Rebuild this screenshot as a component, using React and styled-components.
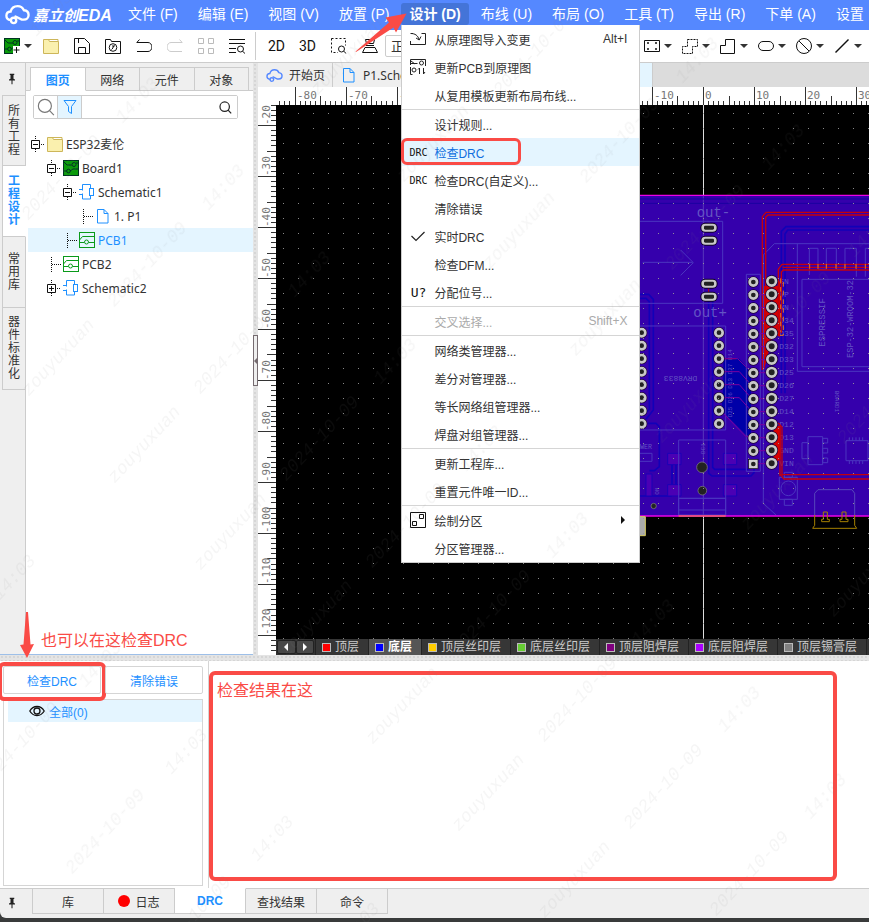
import React from 'react';
import styled, { createGlobalStyle, css } from 'styled-components';

const GlobalStyle = createGlobalStyle`
  * {
    box-sizing: border-box;
  }
  body {
    margin: 0;
    background: #393b3b;
    color: #333;
    font-family: 'Liberation Sans', 'Noto Sans CJK SC', sans-serif;
    font-size: 12px;
    overflow-x: hidden;
  }
  button, input, select {
    font: inherit;
    color: inherit;
  }
  button {
    margin: 0;
    padding: 0;
    border: 0;
    background: none;
    white-space: nowrap;
  }
  svg {
    display: block;
    flex: none;
  }
`;

// =================================================================
//  Icons
// =================================================================

const Icon = ({ size = 16, children, ...rest }) => (
  <svg
    width={size}
    height={size}
    viewBox="0 0 16 16"
    fill="none"
    stroke="currentColor"
    strokeWidth="1"
    aria-hidden="true"
    {...rest}
  >
    {children}
  </svg>
);

const CloudIcon = ({ size, width = 1.5, color = 'currentColor' }) => (
  <Icon size={size} stroke={color} strokeWidth={width} strokeLinecap="round">
    <path d="M3.6 11.6C1.8 11.4.9 10.2.9 8.8c0-1.500 1.100-2.600 2.700-2.700C4.200 3.900 5.900 2.600 8 2.600c1.900 0 3.400 1 4.100 2.700 1.800.2 3 1.400 3 3 0 1.800-1.300 3-3.100 3h-1.300L6.700 9.300" />
    <circle cx="5.500" cy="11.800" r="1.700" />
  </Icon>
);

const BoardIcon = ({ plus }) => (
  <Icon stroke="#032">
    <rect x=".5" y=".5" width="15" height="15" fill="#0a9a0a" />
    <path d="M1 2l3 3h5M15 3h-2M1 11h3M7 11l3-2h5" />
    <circle cx="11" cy="4.500" r="2" />
    <circle cx="5.500" cy="11" r="1.800" />
    {plus && (
      <>
        <rect x="9" y="8" width="8" height="8" fill="#fff" stroke="none" />
        <path d="M12.500 9v6M9.500 12h6" stroke="#111" />
      </>
    )}
  </Icon>
);

const FolderIcon = () => (
  <Icon stroke="#cdb65a">
    <path d="M.5 1.500h5l1 2h9v12H.5z" fill="#faf0ae" />
    <path d="M1 1.500h5M6 1.500h9v2" />
  </Icon>
);

const PageIcon = () => (
  <Icon stroke="#1e90ff">
    <path d="M2.500 1.500h6.500l4 4v9.500h-10.500zM9 1.500v4h4" />
  </Icon>
);

const SchematicIcon = () => (
  <Icon stroke="#1e90ff">
    <path d="M3.500 5.500v-5h8v4M3.500 10.500v4.500h8v-4M0 5.500h4M0 10.500h4M3.500 5.500v1M3.500 9.500v1" />
    <rect x="10.500" y="4.500" width="4" height="7" />
  </Icon>
);

const PcbIcon = () => (
  <Icon stroke="#0a9a1a">
    <rect x=".5" y=".5" width="15" height="15" />
    <path d="M.5 8l3-3.500h12M1 10.500h4M10 10.500h5.500" />
    <circle cx="7.500" cy="10" r="2" />
  </Icon>
);

const PinIcon = () => (
  <Icon size={12} stroke="none" fill="#222">
    <path d="M5 1h6v1.500h-1v5l2 1v1.500H8.700V15H7.300v-5H4V8.500l2-1v-5H5z" />
  </Icon>
);

const SearchIcon = ({ size, color = '#222', width = 1 }) => (
  <Icon size={size} stroke={color} strokeWidth={width}>
    <circle cx="7" cy="7" r="5.800" />
    <path d="M11.200 11.200l3.800 4" />
  </Icon>
);

const EyeIcon = () => (
  <Icon stroke="#111" strokeWidth="1.300">
    <path d="M.8 8C2.500 5 5 3.500 8 3.500S13.500 5 15.200 8C13.500 11 11 12.500 8 12.500S2.500 11 .8 8z" />
    <circle cx="8" cy="8" r="3" />
  </Icon>
);

const Caret = () => (
  <svg width="8" height="4" viewBox="0 0 8 4" aria-hidden="true">
    <path d="M0 0h8L4 4z" fill="#333" />
  </svg>
);

const toolIcons = {
  save: <path d="M.5.5h10l5 5v10H.5zM4.500 15v-5.500h7V15M4.500 1v4" stroke="#111" />,
  history: (
    <g stroke="#111">
      <path d="M.5 15.500V1.500h5l1 2h9v12z" />
      <circle cx="8" cy="9.500" r="3.800" />
      <path d="M8 7v3l-1.500 1.500M8 9l2-1.500" />
    </g>
  ),
  undo: <path d="M3.500 1.500L.8 4.500H12a3.500 4 0 0 1 0 9H1" stroke="#111" />,
  redo: <path d="M12.500 1.500L15.200 4.500H4a3.500 4 0 0 0 0 9h11" stroke="#ccc" />,
  grid: <path d="M.5.5h5v5h-5zM10.500.5h5v5h-5zM.5 10.500h5v5h-5zM10.500 10.500h5v5h-5z" stroke="#bbb" />,
  find: (
    <g stroke="#111">
      <path d="M0 1.500h16M0 5.500h16M0 10.500h7M0 14.500h7" />
      <circle cx="11.500" cy="11" r="3" />
      <path d="M13.500 13.200l2.500 2.300" />
    </g>
  ),
  area: (
    <g stroke="#111">
      <path d="M.5.5h14v7M.5.5v14H7" strokeDasharray="2 2" />
      <circle cx="10.500" cy="11" r="3" />
      <path d="M12.700 13.200l2.500 2.300" />
    </g>
  ),
  flip: <path d="M4 7.500h8M3.500 1.500h9l-1 4h-7zM3 9.500h10l2.500 5H.5z" stroke="#111" />,
  pads: (
    <g stroke="#111">
      <path d="M.5 2.500h15v11H.5z" />
      <path d="M3 5h2M11 5h2M3 11h2M11 11h2" strokeWidth="1.500" />
    </g>
  ),
  region: <path d="M5.500 1.500h10v7h-5v7h-10v-7h5z" stroke="#111" strokeDasharray="2 1" />,
  shape: <path d="M5.500 1.500h9v14h-14v-8h5z" stroke="#111" />,
  oval: <rect x=".5" y="3.500" width="15" height="9" rx="4.500" stroke="#111" />,
  forbid: (
    <g stroke="#111">
      <circle cx="8" cy="8" r="7.500" />
      <path d="M3 3l10 10" />
    </g>
  ),
  line: <path d="M1.500 14.500L14.500 1.500" stroke="#111" strokeWidth="1.500" />,
};

const menuIcons = {
  import: (
    <g stroke="#222">
      <path d="M3 2.500H.5M.5 13.500h15v-11h-4M.5 10v4" />
      <path d="M1 2.500c4 0 7 2 8 6M6 7l3.200 2L11 5.500" />
    </g>
  ),
  update: (
    <g stroke="#222">
      <path d="M.5 6V.5h15V7M.5 4.500h7M.5 8v7.500h2M1 2l4 3M9.500 9v6M9.500 9L8 10.500M13.500 9v6M13.500 15l1.500-2" />
      <circle cx="11.500" cy="4" r="2" />
      <circle cx="4" cy="11" r="2" />
    </g>
  ),
  check: <path d="M1.500 8l4.500 4.500 8.500-8.500" stroke="#222" strokeWidth="1.200" />,
  zone: <path d="M.5.500h15v15H.5zM2.500 9.500h4v4h-4zM9.500 2.500h4v4h-4z" stroke="#111" />,
};

// =================================================================
//  Page frame
// =================================================================

const Page = styled.div`
  position: relative;
  display: flex;
  flex-direction: column;
  min-height: 100vh;
  padding-bottom: 4px;
  overflow: hidden;
`;

const MenuBar = styled.nav`
  display: flex;
  align-items: center;
  height: 30px;
  padding: 0 0 2px 5px;
  background: #5588ff;
  color: #fff;
  font-size: 14px;
`;

const Logo = styled.a`
  display: flex;
  flex: none;
  align-items: center;
  gap: 3px;
  width: 113px;
  color: #fff;
  font-weight: bold;
  font-style: italic;
  text-decoration: none;
  white-space: nowrap;
`;

const LogoName = styled.span`
  font-size: 15px;
`;

const LogoLatin = styled.span`
  font-size: 16px;
`;

const MenuSlot = styled.div`
  position: relative;
  flex: none;
  margin: 0 2px;
`;

const MenuButton = styled.button`
  display: block;
  height: 22px;
  padding: 0 8px;
  line-height: 22px;
  ${(props) =>
    props.$open &&
    css`
      border-radius: 3px;
      background: #4474d8;
      font-weight: bold;
    `}
`;

const Dropdown = styled.ul`
  position: absolute;
  z-index: 10;
  top: 22px;
  left: 0;
  width: 239px;
  margin: 0;
  padding: 0;
  border: 1px solid #ccc;
  border-top-width: 0;
  background: #fff;
  color: #333;
  font-size: 12px;
  list-style: none;
`;

const DropdownRow = styled.li`
  position: relative;
  border-top: ${(props) => (props.$divided ? '1px solid #d5d5d5' : '0')};
`;

const DropdownButton = styled.button`
  display: flex;
  align-items: center;
  gap: 8px;
  width: 100%;
  height: 28px;
  padding: 0 12px 0 8px;
  text-align: left;
  color: ${(props) => (props.$active ? '#0f6fe0' : props.disabled ? '#aaa' : '#333')};
  background: ${(props) => (props.$active ? '#e4f5ff' : 'transparent')};
`;

const IconCell = styled.span`
  display: flex;
  align-items: center;
  justify-content: center;
  flex: none;
  width: 16px;
  height: 16px;
  color: #111;
  font-family: 'DejaVu Sans Mono', monospace;
  font-size: ${(props) => (props.$large ? '13px' : '10px')};
`;

const Shortcut = styled.span`
  margin-left: auto;
`;

const ItemHighlight = styled.span`
  position: absolute;
  inset: 0 118px 1px -1px;
  border: 3px solid #fa4b46;
  border-radius: 6px;
  pointer-events: none;
`;

const ToolBar = styled.div`
  display: flex;
  align-items: center;
  height: 33px;
  padding-right: 2px;
  border-bottom: 1px solid #ccc;
  background: #fff;
`;

const Tool = styled.button`
  display: flex;
  align-items: center;
  justify-content: center;
  gap: 3px;
  flex: none;
  width: 31px;
  height: 32px;
  color: #111;
  font-family: Roboto, sans-serif;
  font-size: 14px;
`;

const WideTool = styled(Tool)`
  width: ${(props) => (props.$narrow ? '35px' : '38px')};
  gap: 4px;
`;

const Divider = styled.span`
  flex: none;
  width: 1px;
  height: 28px;
  margin: 0 5px 0 3px;
  background: #ccc;
`;

const ViewSelect = styled.select`
  width: 90px;
  height: 22px;
  padding: 0 0 0 1px;
  border: 1px solid #ccc;
  border-radius: 2px;
  background: #fff;
  font-size: 13px;
`;

const ToolGroup = styled.div`
  display: flex;
  margin-left: ${(props) => (props.$end ? 'auto' : '0')};
`;

const Workspace = styled.div`
  display: flex;
  flex: 1;
  min-height: 560px;
`;

// Left dock
const SideTabs = styled.div`
  display: flex;
  flex-direction: column;
  flex: none;
  width: 26px;
  padding-left: 2px;
  border-right: 1px solid #ccc;
  border-bottom: 1px solid #9dbfe8;
  background: #efefef;
`;

const PinButton = styled.button`
  display: flex;
  align-items: center;
  justify-content: center;
  flex: none;
  width: ${(props) => (props.$wide ? '24px' : '20px')};
  height: ${(props) => (props.$wide ? '28px' : '32px')};
`;

const SideTab = styled.button`
  width: 24px;
  min-height: 71px;
  padding: 8px 5px;
  border: 1px solid #ccc;
  border-top-width: ${(props) => (props.$first ? '1px' : '0')};
  border-right-color: ${(props) => (props.$active ? '#fff' : '#ccc')};
  background: ${(props) => (props.$active ? '#fff' : '#efefef')};
  color: ${(props) => (props.$active ? '#1e90ff' : '#333')};
  font-weight: ${(props) => (props.$active ? 'bold' : 'normal')};
  line-height: 13px;
  white-space: normal;
`;

const TreePanel = styled.section`
  flex: none;
  width: 227px;
  border-bottom: 1px solid #9dbfe8;
  background: #fff;
`;

const PanelTabs = styled.div`
  display: flex;
  height: 28px;
  padding: 4px 4px 0;
  background: #efefef;
  box-shadow: inset 0 -1px #ccc;
`;

const PanelTab = styled.button`
  flex: 1;
  border: 1px solid #ccc;
  border-left-width: ${(props) => (props.$active ? '1px' : '0')};
  border-bottom-color: ${(props) => (props.$active ? '#fff' : '#ccc')};
  background: ${(props) => (props.$active ? '#fff' : '#efefef')};
  color: ${(props) => (props.$active ? '#1e90ff' : '#333')};
  font-weight: ${(props) => (props.$active ? 'bold' : 'normal')};
`;

const SearchBar = styled.form`
  display: flex;
  align-items: center;
  height: 24px;
  margin: 4px 15px 0 7px;
  border: 1px solid #ccc;
  border-radius: 2px;
`;

const SearchCell = styled.button`
  display: flex;
  align-items: center;
  justify-content: center;
  width: 24px;
  height: 22px;
  border-right: ${(props) => (props.$last ? '0' : '1px solid #ccc')};
  background: ${(props) => (props.$on ? '#e4f5ff' : '#fff')};
`;

const SearchInput = styled.input`
  flex: 1;
  min-width: 0;
  height: 20px;
  padding: 0 4px;
  border: 0;
  outline: 0;
`;

const Tree = styled.ul`
  margin: 13px 0 0;
  padding: 0 0 0 2px;
  list-style: none;
  font-family: 'Noto Sans', 'Noto Sans CJK SC', sans-serif;
`;

const TreeRow = styled.button`
  display: flex;
  align-items: center;
  width: 100%;
  height: 24px;
  padding-left: ${(props) => 3 + props.$level * 16}px;
  background: ${(props) => (props.$active ? '#e4f5ff' : 'transparent')};
  color: ${(props) => (props.$active ? '#1e90ff' : '#333')};
`;

const TreeLabel = styled.span`
  padding-left: 3px;
`;

const Splitter = styled.div`
  position: relative;
  flex: none;
  width: ${(props) => (props.$horizontal ? 'auto' : '5px')};
  height: ${(props) => (props.$horizontal ? '6px' : 'auto')};
  background: conic-gradient(#b0b0b0 25%, transparent 0) 1px 1px / 4px 3px #e6e6e6;
  background: radial-gradient(circle at 1px 1px, #b4b4b4 0, #e4e4e4 1px) 1px 1px / 4px 4px;
`;

const SplitHandle = styled.button`
  position: absolute;
  top: 46%;
  left: 0;
  display: flex;
  align-items: center;
  width: 5px;
  height: 51px;
  border: 1px solid #756b70;
  background: #eee;
`;

// Editor
const Editor = styled.main`
  display: flex;
  flex-direction: column;
  flex: 1;
  min-width: 0;
  background: #fff;
`;

const DocTabs = styled.div`
  display: flex;
  height: 24px;
  background: #dcdcdc;
`;

const DocTab = styled.button`
  display: flex;
  align-items: center;
  gap: 6px;
  flex: none;
  width: ${(props) => props.$width || 75}px;
  padding: 0 8px;
  border-right: 1px solid #ccc;
  background: ${(props) => (props.$active ? '#e4f5ff' : '#efefef')};
  font-family: 'Noto Sans', 'Noto Sans CJK SC', sans-serif;
`;

const RulerX = styled.svg`
  width: 100%;
  height: 18px;
`;

const CanvasRow = styled.div`
  display: flex;
  flex: 1;
  min-height: 0;
`;

const RulerY = styled.svg`
  width: 18px;
`;

const CanvasColumn = styled.div`
  display: flex;
  flex-direction: column;
  flex: 1;
  min-width: 0;
  background: #000;
`;

const Board = styled.svg`
  flex: 1 1 0;
  width: 100%;
  min-height: 0;
`;

const LayerBar = styled.div`
  display: flex;
  height: 16px;
  overflow: hidden;
  background: #333;
  color: #ccc;
`;

const LayerArrows = styled.div`
  display: flex;
  flex: none;
  width: 40px;
  padding: 1px;
  border-right: 1px solid #222;
`;

const LayerArrow = styled.button`
  display: flex;
  align-items: center;
  justify-content: center;
  flex: 1;
  border: 1px solid #222;
  border-radius: 2px;
  background: #484848;
`;

const LayerTab = styled.button`
  display: flex;
  align-items: center;
  gap: 4px;
  flex: none;
  padding: 0 9px 0 6px;
  border-right: 1px solid #222;
  background: ${(props) => (props.$active ? '#555' : '#363636')};
  color: ${(props) => (props.$active ? '#fff' : '#ccc')};
  font-weight: ${(props) => (props.$active ? 'bold' : 'normal')};
  line-height: 16px;
`;

const Swatch = styled.span`
  width: 9px;
  height: 9px;
  border: 1px solid #bbb;
  background: ${(props) => props.$color};
`;

// Bottom dock
const BottomDock = styled.section`
  display: flex;
  height: 227px;
  background: #fff;
`;

const DrcSide = styled.div`
  display: flex;
  flex-direction: column;
  flex: none;
  width: 209px;
  padding: 5px 5px 2px 3px;
  border-right: 1px solid #d5d5d5;
`;

const DrcButtons = styled.div`
  display: flex;
  gap: 4px;
  margin-bottom: 5px;
`;

const ButtonSlot = styled.div`
  position: relative;
  flex: 1;
`;

const DrcButton = styled.button`
  width: 100%;
  height: 28px;
  border: 1px solid #d5d5d5;
  border-radius: 2px;
  background: #fff;
  color: #1e90ff;
`;

const ButtonHighlight = styled.span`
  position: absolute;
  inset: -4px -5px -7px -5px;
  border: 4px solid #fa4b46;
  border-radius: 6px;
  pointer-events: none;
`;

const DrcList = styled.div`
  flex: 1;
  padding-left: 4px;
  border: 1px solid #d5d5d5;
`;

const DrcItem = styled.button`
  display: flex;
  align-items: center;
  gap: 4px;
  width: 100%;
  height: 22px;
  padding-left: 21px;
  background: #e4f5ff;
  color: #1e90ff;
`;

const ResultPane = styled.div`
  display: flex;
  flex: 1;
  min-width: 0;
  padding: 10px 32px 7px 0;
`;

const ResultNote = styled.p`
  flex: 1;
  margin: 0;
  padding: 4px;
  border: 4px solid #fa4b46;
  border-radius: 6px;
  color: #fa4b46;
  font-size: 16px;
  line-height: 24px;
`;

const BottomTabs = styled.div`
  display: flex;
  height: 30px;
  padding-bottom: 4px;
  border-radius: 0 0 0 6px;
  background: #efefef;
`;

const BottomTab = styled.button`
  display: flex;
  align-items: center;
  justify-content: center;
  gap: 5px;
  flex: none;
  width: 71px;
  border: 1px solid ${(props) => (props.$active ? '#fff' : '#ccc')};
  border-left-width: 0;
  border-right-color: #ccc;
  border-bottom-color: #ccc;
  background: ${(props) => (props.$active ? '#fff' : '#efefef')};
  color: ${(props) => (props.$active ? '#1e90ff' : '#333')};
  font-weight: ${(props) => (props.$active ? 'bold' : 'normal')};
`;

const BottomPin = styled.div`
  flex: none;
  width: 33px;
  border: solid #ccc;
  border-width: 1px 1px 0 0;
`;

const BottomRest = styled.div`
  flex: 1;
  border-top: 1px solid #ccc;
`;

const RedDot = styled.span`
  width: 12px;
  height: 12px;
  border-radius: 50%;
  background: #f00;
`;

// Notes and marks lying over the window
const NoteText = styled.p`
  position: absolute;
  bottom: 269px;
  left: 41px;
  margin: 0;
  color: #fa4b46;
  font-size: 16px;
  line-height: 24px;
`;

const MenuArrow = styled.svg`
  position: absolute;
  z-index: 20;
  top: 12px;
  left: 354px;
`;

const ButtonArrow = styled.svg`
  position: absolute;
  bottom: 263px;
  left: 19px;
`;

const WatermarkLayer = styled.svg`
  position: absolute;
  z-index: 30;
  inset: 0;
  width: 100%;
  height: 100%;
  pointer-events: none;
`;

// =================================================================
//  Data
// =================================================================

const menus = [
  '文件 (F)',
  '编辑 (E)',
  '视图 (V)',
  '放置 (P)',
  '设计 (D)',
  '布线 (U)',
  '布局 (O)',
  '工具 (T)',
  '导出 (R)',
  '下单 (A)',
  '设置',
];

const designItems = [
  { label: '从原理图导入变更', icon: 'import', shortcut: 'Alt+I' },
  { label: '更新PCB到原理图', icon: 'update' },
  { label: '从复用模板更新布局布线...' },
  { label: '设计规则...', divided: true },
  { label: '检查DRC', text: 'DRC', active: true },
  { label: '检查DRC(自定义)...', text: 'DRC' },
  { label: '清除错误' },
  { label: '实时DRC', icon: 'check' },
  { label: '检查DFM...' },
  { label: '分配位号...', text: 'U?', large: true },
  { label: '交叉选择...', shortcut: 'Shift+X', disabled: true, divided: true },
  { label: '网络类管理器...', divided: true },
  { label: '差分对管理器...' },
  { label: '等长网络组管理器...' },
  { label: '焊盘对组管理器...' },
  { label: '更新工程库...', divided: true },
  { label: '重置元件唯一ID...' },
  { label: '绘制分区', icon: 'zone', submenu: true, divided: true },
  { label: '分区管理器...' },
];

const treeItems = [
  { label: 'ESP32麦伦', level: 0, toggle: '-', icon: <FolderIcon /> },
  { label: 'Board1', level: 1, toggle: '-', icon: <BoardIcon /> },
  { label: 'Schematic1', level: 2, toggle: '-', icon: <SchematicIcon /> },
  { label: '1. P1', level: 3, icon: <PageIcon /> },
  { label: 'PCB1', level: 2, icon: <PcbIcon />, active: true },
  { label: 'PCB2', level: 1, icon: <PcbIcon /> },
  { label: 'Schematic2', level: 1, toggle: '+', icon: <SchematicIcon /> },
];

const layers = [
  ['顶层', '#ff0000'],
  ['底层', '#0000ff'],
  ['顶层丝印层', '#ffcc00'],
  ['底层丝印层', '#66cc33'],
  ['顶层阻焊层', '#800080'],
  ['底层阻焊层', '#aa00ff'],
  ['顶层锡膏层', '#808080'],
];

// text, first centre and how many repeats follow down the diagonal
const watermarks = [
  ['2024-10-09', 61, 177, 8],
  ['2024-10-09', 447, -34, 5],
  ['2024-10-09', 19, 744, 2],
  ['14:03', 51, 13, 9],
  ['14:03', 697, 60, 2],
  ['14:03', 14, 577, 4],
  ['zouyuxuan', 58, 357, 7],
  ['zouyuxuan', 347, 56, 6],
];

const range = (from, to) => Array.from({ length: to - from + 1 }, (_, i) => from + i);

// =================================================================
//  Parts
// =================================================================

const DesignMenu = () => (
  <Dropdown>
    {designItems.map((item) => (
      <DropdownRow key={item.label} $divided={item.divided}>
        <DropdownButton type="button" $active={item.active} disabled={item.disabled}>
          <IconCell $large={item.large}>
            {item.icon ? <Icon>{menuIcons[item.icon]}</Icon> : item.text}
          </IconCell>
          {item.label}
          {item.shortcut && <Shortcut>{item.shortcut}</Shortcut>}
          {item.submenu && (
            <Shortcut>
              <svg width="6" height="8" viewBox="0 0 6 8" aria-hidden="true">
                <path d="M0 0l4 4-4 4z" fill="#111" />
              </svg>
            </Shortcut>
          )}
        </DropdownButton>
        {item.active && <ItemHighlight />}
      </DropdownRow>
    ))}
  </Dropdown>
);

const TreeToggle = ({ sign }) => (
  <svg width="16" height="24" viewBox="0 0 16 24" fill="none" stroke="#111" aria-hidden="true">
    {sign ? (
      <>
        <path d="M4.500 4v4M4.500 17v4M10 12.500h4" strokeDasharray="1 1" />
        <path d="M.5 8.500h8v8h-8zM2 12.500h5" />
        {sign === '+' && <path d="M4.500 10v5" />}
      </>
    ) : (
      <path d="M4.500 5v15M5 12.500h9" strokeDasharray="1 1" />
    )}
  </svg>
);

// Horizontal scale, ten units every 51px, zero at x = 445
const HorizontalRuler = () => (
  <RulerX aria-hidden="true" shapeRendering="crispEdges">
    {range(-83, 120).map((n) => {
      const x = 445.5 + n * 5.105;
      const top = n % 10 === 0 ? 0 : n % 5 === 0 ? 9 : 14;
      return x > 18 && <path key={n} d={`M${x} ${top}V18`} stroke="#333" />;
    })}
    {range(-8, 3).map((n) => (
      <text
        key={n}
        x={447 + n * 51}
        y="12"
        fill="#777"
        fontFamily="'DejaVu Sans Mono', monospace"
        fontSize="11"
      >
        {n * 10}
      </text>
    ))}
  </RulerX>
);

const VerticalRuler = () => (
  <RulerY aria-hidden="true">
    {range(-130, -16).map((n) => {
      const y = Math.round(20 + (-20 - n) * 5.1) + 0.5;
      const left = n % 10 === 0 ? 0 : n % 5 === 0 ? 9 : 13;
      return <path key={n} d={`M${left} ${y}H18`} stroke="#333" />;
    })}
    {range(2, 12).map((n) => (
      <text
        key={n}
        transform={`translate(12 ${20 + (n - 2) * 51}) rotate(-90)`}
        fill="#777"
        fontFamily="'DejaVu Sans Mono', monospace"
        fontSize="11"
      >
        {n * -10}
      </text>
    ))}
  </RulerY>
);

const Pad = ({ x, y, r = 15 }) => (
  <g transform={`translate(${x} ${y})`}>
    <circle r={r - 3} fill="#222" stroke="#1a0033" strokeWidth="10" />
    <circle r={r - 4} fill="#222" stroke="#c8c8c8" strokeWidth="8" />
  </g>
);

const OvalPad = ({ y }) => (
  <g transform={`translate(219 ${y})`}>
    <rect x="-26" y="-15" width="52" height="30" rx="15" fill="#10002a" />
    <rect x="-23" y="-12" width="46" height="24" rx="12" fill="#c8c8c8" />
    <rect x="-15" y="-6" width="30" height="12" rx="4" fill="#222" />
  </g>
);

const pinNames = [
  'EN', 'VP', 'VN', 'D34', 'D35', 'D32', 'D33', 'D25',
  'D26', 'D27', 'D14', 'D12', 'D13', 'GND', 'VIN',
];

const Pcb = () => (
  <Board aria-label="PCB1" role="img">
    <defs>
      <pattern id="dots" x="7" y="8" width="15" height="15" patternUnits="userSpaceOnUse">
        <rect width="1" height="1" fill="#999" />
      </pattern>
    </defs>
    <rect width="100%" height="100%" fill="#000" />
    <path d="M427.500 0V2000" stroke="#ddd" />
    {/* board geometry is kept in thirds of a pixel */}
    <g transform="translate(360 75) scale(.33333)" fill="none">
      <rect x="-700" y="46" width="2600" height="962" fill="#3500ac" />
      <path d="M202 46V1008" stroke="#5737bb" strokeWidth="3" />
      <path d="M0 57H1900M0 70H1900" stroke="#1a00a0" strokeWidth="3" />

      {/* bottom copper */}
      <path
        d="M262 536H310L345 575V765H330L258 692V660L262 614Z"
        fill="#0000a8"
      />
      <g stroke="#1200b8" strokeWidth="5">
        <path d="M0 343H38L52 358V690L30 718M0 355H30L40 365V688L20 708" />
        <path d="M218 362V880L228 888H345L354 878V862M230 362V862L236 868H340" />
        <path d="M436 640V154L450 140H1900M447 640V162L455 150H1900" />
        <path d="M36 730H60L70 740V860L55 872H40M12 948H105L120 935V840M108 850V930" />
      </g>
      <g fill="#4b00b4" stroke="#1b00b6" strokeWidth="3">
        <path d="M95 820h40v34H95zM262 820h40v34h-40zM95 914h40v34H95zM262 914h40v34h-40zM30 882h18v66H30z" />
      </g>

      {/* silkscreen */}
      <g stroke="#4b35c0" strokeWidth="3">
        <path d="M0 124H260V370H0M20 247H170M134 210L172 248L134 286" />
        <path d="M0 438H269V750H0M331 283H373V874H331ZM128 780H269V1008M128 780V1008M128 955H269M128 990H269" />
        <path d="M382 225L415 191H1900M382 225V970L420 1005M484 191V574H1900M498 298H1900M498 298V560H1900" />
        <path d="M520 285V205H546V268H571V205H601V268H627V205H661V290M688 290V205H720" />
        <path d="M516 770h44v84h-44zM498 788h18v48h-18zM560 775h15v14h-15zM560 805h15v14h-15zM560 834h15v14h-15z" />
        <path d="M630 782h66v60h-66zM640 772v10M650 772v10M660 772v10M670 772v10M680 772v10M640 842v10M650 842v10M660 842v10M670 842v10M680 842v10" />
        <path d="M430 892h54v66h-54zM445 877h24v15h-24zM445 958h24v18h-24zM0 820h48v24H0z" />
        <circle cx="457" cy="925" r="22" />
        <path d="M128 955h141v50H128z" />
      </g>
      <g fill="#6454c4" fontFamily="'Liberation Mono', monospace">
        <text x="182" y="110" fontSize="42">out-</text>
        <text x="172" y="412" fontSize="42">out+</text>
        <text transform="translate(568 500) rotate(-90)" fontSize="27">ESPRESSIF</text>
        <text transform="translate(652 534) rotate(-90)" fontSize="26">ESP-32-WROOM-32</text>
        <text transform="translate(184 587) rotate(180)" fontSize="24">DRV8833</text>
        <text transform="translate(598 632) rotate(90)" fontSize="18">BOARD1</text>
        <text transform="translate(208 822) rotate(-90)" fontSize="18">DC1</text>
        <text transform="translate(68 944) rotate(-90)" fontSize="18">ON</text>
        <text x="12" y="808" fontSize="20">WER</text>
        {['D14', 'D27', 'D13', 'D26', 'D25'].map((name, i) => (
          <text key={name} transform={`translate(287 ${540 + i * 43}) rotate(-90)`} fontSize="18">
            {name}
          </text>
        ))}
        {pinNames.map((name, i) => (
          <text key={name} x="430" y={312 + i * 39} fontSize="24">
            {name}
          </text>
        ))}
      </g>

      {/* top copper */}
      <path
        d="M384 318H424L432 300V470L412 462L384 570ZM412 735L434 738V838L412 852Z"
        fill="#d80000"
      />
      <g stroke="#c4000e" strokeWidth="4">
        <path d="M379 570V110L390 97H1900M389 540V112L396 105H1900" />
        <path d="M427 460V268L438 253H1900M436 460V276L442 270H1900M440 262H1900" />
        <path d="M416 730H428L438 742V890L444 897H1900M432 745V886L440 884H1900" />
        <path d="M218 325V340M260 536L300 536" strokeWidth="3" />
      </g>
      <path
        d="M434 295V455M442 306V466H428M521 252V275M546 252V275M571 252V275M600 252V275M627 252V275M660 252V275M688 252V275"
        stroke="#e8741a"
        strokeWidth="3"
        strokeDasharray="14 12"
      />
      <g stroke="#7a00a0" strokeWidth="3">
        {range(1, 14).map((n) => (
          <path key={n} d={`M365 ${305 + n * 39}H395`} />
        ))}
        <path d="M262 536H305L345 575M262 575H310L345 614M262 614H310L345 653M262 653H310L345 692M262 700L330 770H345" />
      </g>

      {/* pads and holes */}
      {[143, 182, 311, 350].map((y) => (
        <OvalPad key={y} y={y} />
      ))}
      {range(0, 7).map((n) => (
        <React.Fragment key={n}>
          <Pad x={17} y={458 + n * 39} />
          <Pad x={249} y={458 + n * 39} />
        </React.Fragment>
      ))}
      {range(0, 13).map((n) => (
        <Pad key={n} x={352} y={306 + n * 39} />
      ))}
      <rect x="338" y="838" width="28" height="28" fill="#d0d0d0" stroke="#111" strokeWidth="2" />
      <circle cx="352" cy="852" r="7" fill="#222" />
      {range(0, 14).map((n) => (
        <Pad key={n} x={407} y={304 + n * 39} r={17} />
      ))}
      <g fill="#222" stroke="#888" strokeWidth="2">
        <circle cx="198" cy="862" r="16" />
        <circle cx="199" cy="932" r="13" />
        <circle cx="53" cy="978" r="8" />
      </g>

      <path d="M-700 46H1900M-700 1008H1900" stroke="#ec00e8" strokeWidth="4" />
      <path d="M128 1008H269" stroke="#f4606c" strokeWidth="4" />
      <path d="M-20 1010H28V1067H-20Z" fill="#aaa" stroke="#d8cc60" strokeWidth="3" />
      <path d="M536 1005V940L546 929H648L656 940V1005" stroke="#5747bb" strokeWidth="3" />
      <g stroke="#a68200" strokeWidth="3">
        <path d="M536 1005V1036L530 1045H662L656 1036V1005M557 1025H580V1018H574V996H562V1018H557ZM612 1025H636V1018H630V996H618V1018H612Z" />
      </g>
    </g>
    <rect width="100%" height="100%" fill="url(#dots)" opacity=".9" />
  </Board>
);

// Diagonal rows of user name, date and time over the whole window
const Watermark = () => (
  <WatermarkLayer aria-hidden="true">
    <g
      fill="#888"
      opacity=".08"
      fontFamily="'Liberation Mono', monospace"
      fontSize="18"
      fontStyle="italic"
      textAnchor="middle"
    >
      {watermarks.map(([text, x, y, last]) =>
        range(0, last).map((n) => (
          <text
            key={`${text}${x}${n}`}
            transform={`translate(${x + n * 86 + 4} ${y + n * 87 + 4}) rotate(-47)`}
          >
            {text}
          </text>
        ))
      )}
    </g>
  </WatermarkLayer>
);

const App = () => (
  <>
    <GlobalStyle />
    <Page>
      <MenuBar>
        <Logo href="#">
          <CloudIcon size={25} />
          <LogoName>
            嘉立创<LogoLatin>EDA</LogoLatin>
          </LogoName>
        </Logo>
        {menus.map((menu) => {
          const open = menu === '设计 (D)';
          return (
            <MenuSlot key={menu}>
              <MenuButton type="button" $open={open}>
                {menu}
              </MenuButton>
              {open && <DesignMenu />}
            </MenuSlot>
          );
        })}
      </MenuBar>

      <ToolBar>
        <ToolGroup>
          <WideTool type="button" aria-label="新建" $narrow>
            <BoardIcon plus />
            <Caret />
          </WideTool>
          <Tool type="button" aria-label="打开">
            <FolderIcon />
          </Tool>
          {['save', 'history', 'undo', 'redo', 'grid', 'find'].map((name) => (
            <Tool key={name} type="button" aria-label={name}>
              <Icon>{toolIcons[name]}</Icon>
            </Tool>
          ))}
        </ToolGroup>
        <Divider />
        <ToolGroup>
          <Tool type="button">2D</Tool>
          <Tool type="button">3D</Tool>
          {['area', 'flip'].map((name) => (
            <Tool key={name} type="button" aria-label={name}>
              <Icon>{toolIcons[name]}</Icon>
            </Tool>
          ))}
        </ToolGroup>
        <ViewSelect aria-label="亮度" defaultValue="normal">
          <option value="normal">正常亮度</option>
        </ViewSelect>
        <ToolGroup $end>
          {['pads', 'region', 'shape', 'oval', 'forbid', 'line'].map((name) => (
            <WideTool key={name} type="button" aria-label={name}>
              <Icon>{toolIcons[name]}</Icon>
              <Caret />
            </WideTool>
          ))}
        </ToolGroup>
      </ToolBar>

      <Workspace>
        <SideTabs>
          <PinButton type="button" aria-label="固定">
            <PinIcon />
          </PinButton>
          <SideTab type="button" $first>
            所有工程
          </SideTab>
          <SideTab type="button" $active>
            工程设计
          </SideTab>
          <SideTab type="button">常用库</SideTab>
          <SideTab type="button">器件标准化</SideTab>
        </SideTabs>

        <TreePanel>
          <PanelTabs>
            {['图页', '网络', '元件', '对象'].map((tab, i) => (
              <PanelTab key={tab} type="button" $active={i === 0}>
                {tab}
              </PanelTab>
            ))}
          </PanelTabs>
          <SearchBar>
            <SearchCell type="button" aria-label="查找">
              <SearchIcon size={18} color="#777" />
            </SearchCell>
            <SearchCell type="button" aria-label="过滤" $on>
              <Icon stroke="#1e90ff">
                <path d="M2 1.500h12L9.500 7.500v7l-3-2v-5z" />
              </Icon>
            </SearchCell>
            <SearchInput aria-label="搜索" />
            <SearchCell type="button" aria-label="搜索" $last>
              <SearchIcon size={13} width={1.5} />
            </SearchCell>
          </SearchBar>
          <Tree>
            {treeItems.map((item) => (
              <li key={item.label}>
                <TreeRow type="button" $level={item.level} $active={item.active}>
                  <TreeToggle sign={item.toggle} />
                  {item.icon}
                  <TreeLabel>{item.label}</TreeLabel>
                </TreeRow>
              </li>
            ))}
          </Tree>
        </TreePanel>

        <Splitter>
          <SplitHandle type="button" aria-label="收起">
            <svg width="3" height="6" viewBox="0 0 3 6" aria-hidden="true">
              <path d="M3 0v6L0 3z" fill="#756b70" />
            </svg>
          </SplitHandle>
        </Splitter>

        <Editor>
          <DocTabs>
            <DocTab type="button">
              <CloudIcon size={17} color="#5588ff" width={1.3} />
              开始页
            </DocTab>
            <DocTab type="button" $width={160}>
              <PageIcon />
              P1.Schematic1
            </DocTab>
            <DocTab type="button" $width={160} $active>
              <PcbIcon />
              PCB1
            </DocTab>
          </DocTabs>
          <HorizontalRuler />
          <CanvasRow>
            <VerticalRuler />
            <CanvasColumn>
              <Pcb />
              <LayerBar>
                <LayerArrows>
                  <LayerArrow type="button" aria-label="上一层">
                    <svg width="4" height="8" viewBox="0 0 4 8">
                      <path d="M4 0v8L0 4z" fill="#fff" />
                    </svg>
                  </LayerArrow>
                  <LayerArrow type="button" aria-label="下一层">
                    <svg width="4" height="8" viewBox="0 0 4 8">
                      <path d="M0 0v8l4-4z" fill="#fff" />
                    </svg>
                  </LayerArrow>
                </LayerArrows>
                {layers.map(([name, color], i) => (
                  <LayerTab key={name} type="button" $active={i === 1}>
                    <Swatch $color={color} />
                    {name}
                  </LayerTab>
                ))}
              </LayerBar>
            </CanvasColumn>
          </CanvasRow>
        </Editor>
      </Workspace>

      <Splitter $horizontal />

      <BottomDock>
        <DrcSide>
          <DrcButtons>
            <ButtonSlot>
              <DrcButton type="button">检查DRC</DrcButton>
              <ButtonHighlight />
            </ButtonSlot>
            <ButtonSlot>
              <DrcButton type="button">清除错误</DrcButton>
            </ButtonSlot>
          </DrcButtons>
          <DrcList>
            <DrcItem type="button">
              <EyeIcon />
              全部(0)
            </DrcItem>
          </DrcList>
        </DrcSide>
        <ResultPane>
          <ResultNote>检查结果在这</ResultNote>
        </ResultPane>
      </BottomDock>

      <BottomTabs>
        <BottomPin>
          <PinButton type="button" aria-label="固定" $wide>
            <PinIcon />
          </PinButton>
        </BottomPin>
        <BottomTab type="button">库</BottomTab>
        <BottomTab type="button">
          <RedDot />
          日志
        </BottomTab>
        <BottomTab type="button" $active>
          DRC
        </BottomTab>
        <BottomTab type="button">查找结果</BottomTab>
        <BottomTab type="button">命令</BottomTab>
        <BottomRest />
      </BottomTabs>

      <NoteText>也可以在这检查DRC</NoteText>
      <MenuArrow width="54" height="42" viewBox="0 0 54 42" aria-hidden="true">
        <path d="M1.500 39.500L35 10.500L31.500 5.500L52.500 1.500L42 20.500L39.500 15.500L2 40z" fill="#fa4b46" />
      </MenuArrow>
      <ButtonArrow width="16" height="48" viewBox="0 0 16 48" aria-hidden="true">
        <path d="M7 1h2l2.500 32.500L15 33 8 47 1 34l3.500-.5z" fill="#fa4b46" />
      </ButtonArrow>
      <Watermark />
    </Page>
  </>
);

export default App;
